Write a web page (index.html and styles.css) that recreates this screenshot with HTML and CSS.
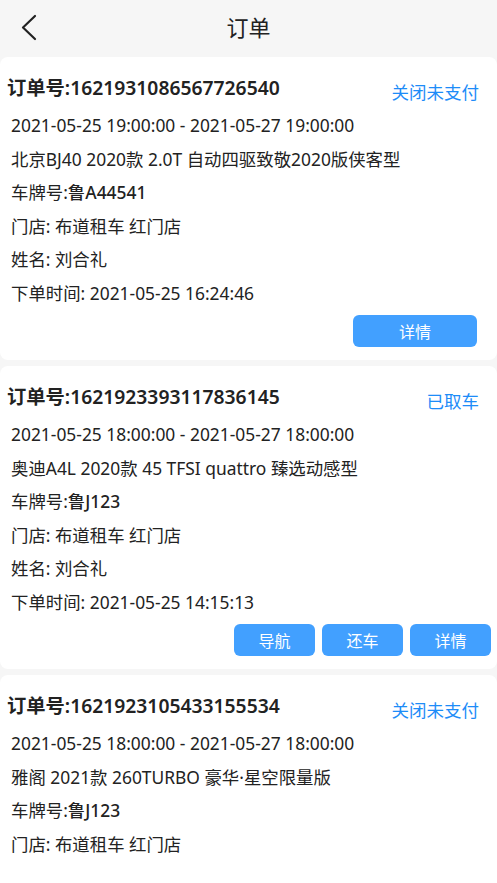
FILE: index.html
```html
<!DOCTYPE html>
<html>
<head>
  <meta name="viewport" content="width=device-width,initial-scale=1.0">
  <title>订单</title>
  <link rel="stylesheet" href="styles.css">
</head>
<body>

  <div class="topbar">
    <a class="back" href="#">
      <svg width="18" height="28" viewBox="0 0 18 28"><polyline points="15,2 3,13.5 15,25" fill="none" stroke="#222" stroke-width="2.2" stroke-linecap="round" stroke-linejoin="round"/></svg>
    </a>
    <h1>订单</h1>
  </div>

  <ul class="orders">
    <li class="card">
      <div class="card-head">
        <span class="order-no">订单号:1621931086567726540</span>
        <span class="status">关闭未支付</span>
      </div>
      <div class="rows">
        <p>2021-05-25 19:00:00 - 2021-05-27 19:00:00</p>
        <p>北京BJ40 2020款 2.0T 自动四驱致敬2020版侠客型</p>
        <p>车牌号:<b>鲁A44541</b></p>
        <p>门店: 布道租车 红门店</p>
        <p>姓名: 刘合礼</p>
        <p>下单时间: 2021-05-25 16:24:46</p>
      </div>
      <div class="actions single">
        <button>详情</button>
      </div>
    </li>

    <li class="card">
      <div class="card-head">
        <span class="order-no">订单号:1621923393117836145</span>
        <span class="status">已取车</span>
      </div>
      <div class="rows">
        <p>2021-05-25 18:00:00 - 2021-05-27 18:00:00</p>
        <p>奥迪A4L 2020款 45 TFSI quattro 臻选动感型</p>
        <p>车牌号:<b>鲁J123</b></p>
        <p>门店: 布道租车 红门店</p>
        <p>姓名: 刘合礼</p>
        <p>下单时间: 2021-05-25 14:15:13</p>
      </div>
      <div class="actions">
        <button>导航</button>
        <button>还车</button>
        <button>详情</button>
      </div>
    </li>

    <li class="card last">
      <div class="card-head">
        <span class="order-no">订单号:1621923105433155534</span>
        <span class="status">关闭未支付</span>
      </div>
      <div class="rows">
        <p>2021-05-25 18:00:00 - 2021-05-27 18:00:00</p>
        <p>雅阁 2021款 260TURBO 豪华·星空限量版</p>
        <p>车牌号:<b>鲁J123</b></p>
        <p>门店: 布道租车 红门店</p>
      </div>
    </li>
  </ul>

</body>
</html>
```

FILE: styles.css
```css
html, body { height: 100%; }
body { margin: 0; overflow: hidden; background: #f6f6f6; color: #222; font-family: "Noto Sans", "Noto Sans CJK SC", sans-serif; }

.topbar { height: 57px; display: flex; align-items: center; justify-content: center; position: relative; }
.topbar h1 { margin: 0; font-size: 22px; font-weight: 400; line-height: 1; padding-bottom: 3px; }
.back { position: absolute; left: 20px; top: 14px; display: block; }

.orders { list-style: none; margin: 0; padding: 0; display: flex; flex-direction: column; gap: 6px; }
.card { background: #fff; border-radius: 8px; padding: 18px 6px 13px 7px; }
.card.last { min-height: 300px; }

.card-head { display: flex; justify-content: space-between; align-items: flex-start; }
.order-no { font-size: 19.3px; font-weight: 600; line-height: 26px; }
.status { color: #1d8cf8; font-size: 17.5px; line-height: 26px; margin-top: 4px; margin-right: 12px; }

.rows { margin-top: 4px; padding-left: 4px; }
.rows p { margin: 0; font-size: 17.4px; line-height: 33.5px; white-space: nowrap; }
.rows b { font-weight: 500; }

.actions { display: flex; justify-content: flex-end; gap: 7px; margin-top: 5px; }
.actions button { width: 81px; height: 32px; border: none; border-radius: 6px; background: #42a0ff; color: #fff; font-family: inherit; font-size: 16px; padding: 0; }
.actions.single { padding-right: 14px; }
.actions.single button { width: 124px; }
```
